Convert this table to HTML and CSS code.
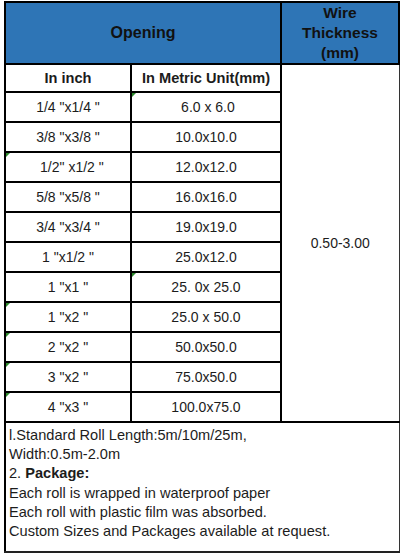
FILE: index.html
```html
<!DOCTYPE html>
<html>
<head>
<meta charset="utf-8">
<link rel="stylesheet" href="styles.css">
</head>
<body>
<div class="sheet">
<table class="spec">
  <colgroup>
    <col class="c-inch">
    <col class="c-metric">
    <col class="c-wire">
  </colgroup>
  <tr class="head">
    <th colspan="2" class="blue">Opening</th>
    <th class="blue wire-h">Wire<br>Thickness<br>(mm)</th>
  </tr>
  <tr class="sub">
    <th class="subh">In inch</th>
    <th class="subh">In Metric Unit(mm)</th>
    <td rowspan="12" class="wire">0.50-3.00</td>
  </tr>
  <tr><td>1/4 "x1/4 "</td><td class="flag">&nbsp;6.0 x 6.0</td></tr>
  <tr><td>3/8 "x3/8 "</td><td>10.0x10.0</td></tr>
  <tr><td class="flag">&nbsp; 1/2" x1/2 "</td><td>12.0x12.0</td></tr>
  <tr><td>5/8 "x5/8 "</td><td>16.0x16.0</td></tr>
  <tr><td>3/4 "x3/4 "</td><td>19.0x19.0</td></tr>
  <tr><td>1 "x1/2 "</td><td>25.0x12.0</td></tr>
  <tr><td>1 "x1 "</td><td class="flag">25. 0x 25.0</td></tr>
  <tr><td class="flag">1 "x2 "</td><td>25.0 x 50.0</td></tr>
  <tr><td class="flag">2 "x2 "</td><td>50.0x50.0</td></tr>
  <tr><td class="flag">3 "x2 "</td><td>75.0x50.0</td></tr>
  <tr><td class="flag">4 "x3 "</td><td>100.0x75.0</td></tr>
  <tr>
    <td colspan="3" class="notes">
      <div>l.Standard Roll Length:5m/10m/25m,</div>
      <div>Width:0.5m-2.0m</div>
      <div>2. <b>Package:</b></div>
      <div>Each roll is wrapped in waterproof paper</div>
      <div>Each roll with plastic film was absorbed.</div>
      <div>Custom Sizes and Packages available at request.</div>
    </td>
  </tr>
</table>
</div>
</body>
</html>
```

FILE: styles.css
```css
html, body {
  margin: 0;
  padding: 0;
  background: #ffffff;
}
body {
  font-family: "Liberation Sans", Arial, sans-serif;
  color: #1c1c1c;
}
.sheet {
  padding: 1px 0 0 4px;
}
.spec {
  border-collapse: collapse;
  table-layout: fixed;
  width: 396px;
  font-size: 14px;
}
.c-inch { width: 126px; }
.c-metric { width: 150px; }
.c-wire { width: 118px; }
.spec th, .spec td {
  border: 2px solid #000;
  padding: 0;
  text-align: center;
  vertical-align: middle;
}
.head th {
  height: 60px;
}
.blue {
  background: #2e75b6;
  color: #111;
  font-weight: bold;
  font-size: 16px;
}
.wire-h {
  font-size: 15.5px;
  line-height: 20px;
  border-right: 1px solid #333;
}
.sub th {
  height: 26px;
  font-weight: bold;
  font-size: 14.6px;
  background: #fff;
}
.spec td {
  height: 28px;
  position: relative;
}
.spec td.wire {
  border-right: 1px solid #333;
  border-bottom: 2px solid #000;
  height: auto;
}
.flag::before {
  content: "";
  position: absolute;
  left: 0;
  top: 0;
  border-top: 4px solid #2e8b2e;
  border-right: 4px solid transparent;
}
.spec td.notes {
  text-align: left;
  height: auto;
  padding: 3px 0 10px 3px;
  line-height: 19.2px;
  font-size: 14.6px;
  border-left: 2px solid #000;
  border-right: 1px solid #333;
  border-bottom: 2px solid #222;
}
```
